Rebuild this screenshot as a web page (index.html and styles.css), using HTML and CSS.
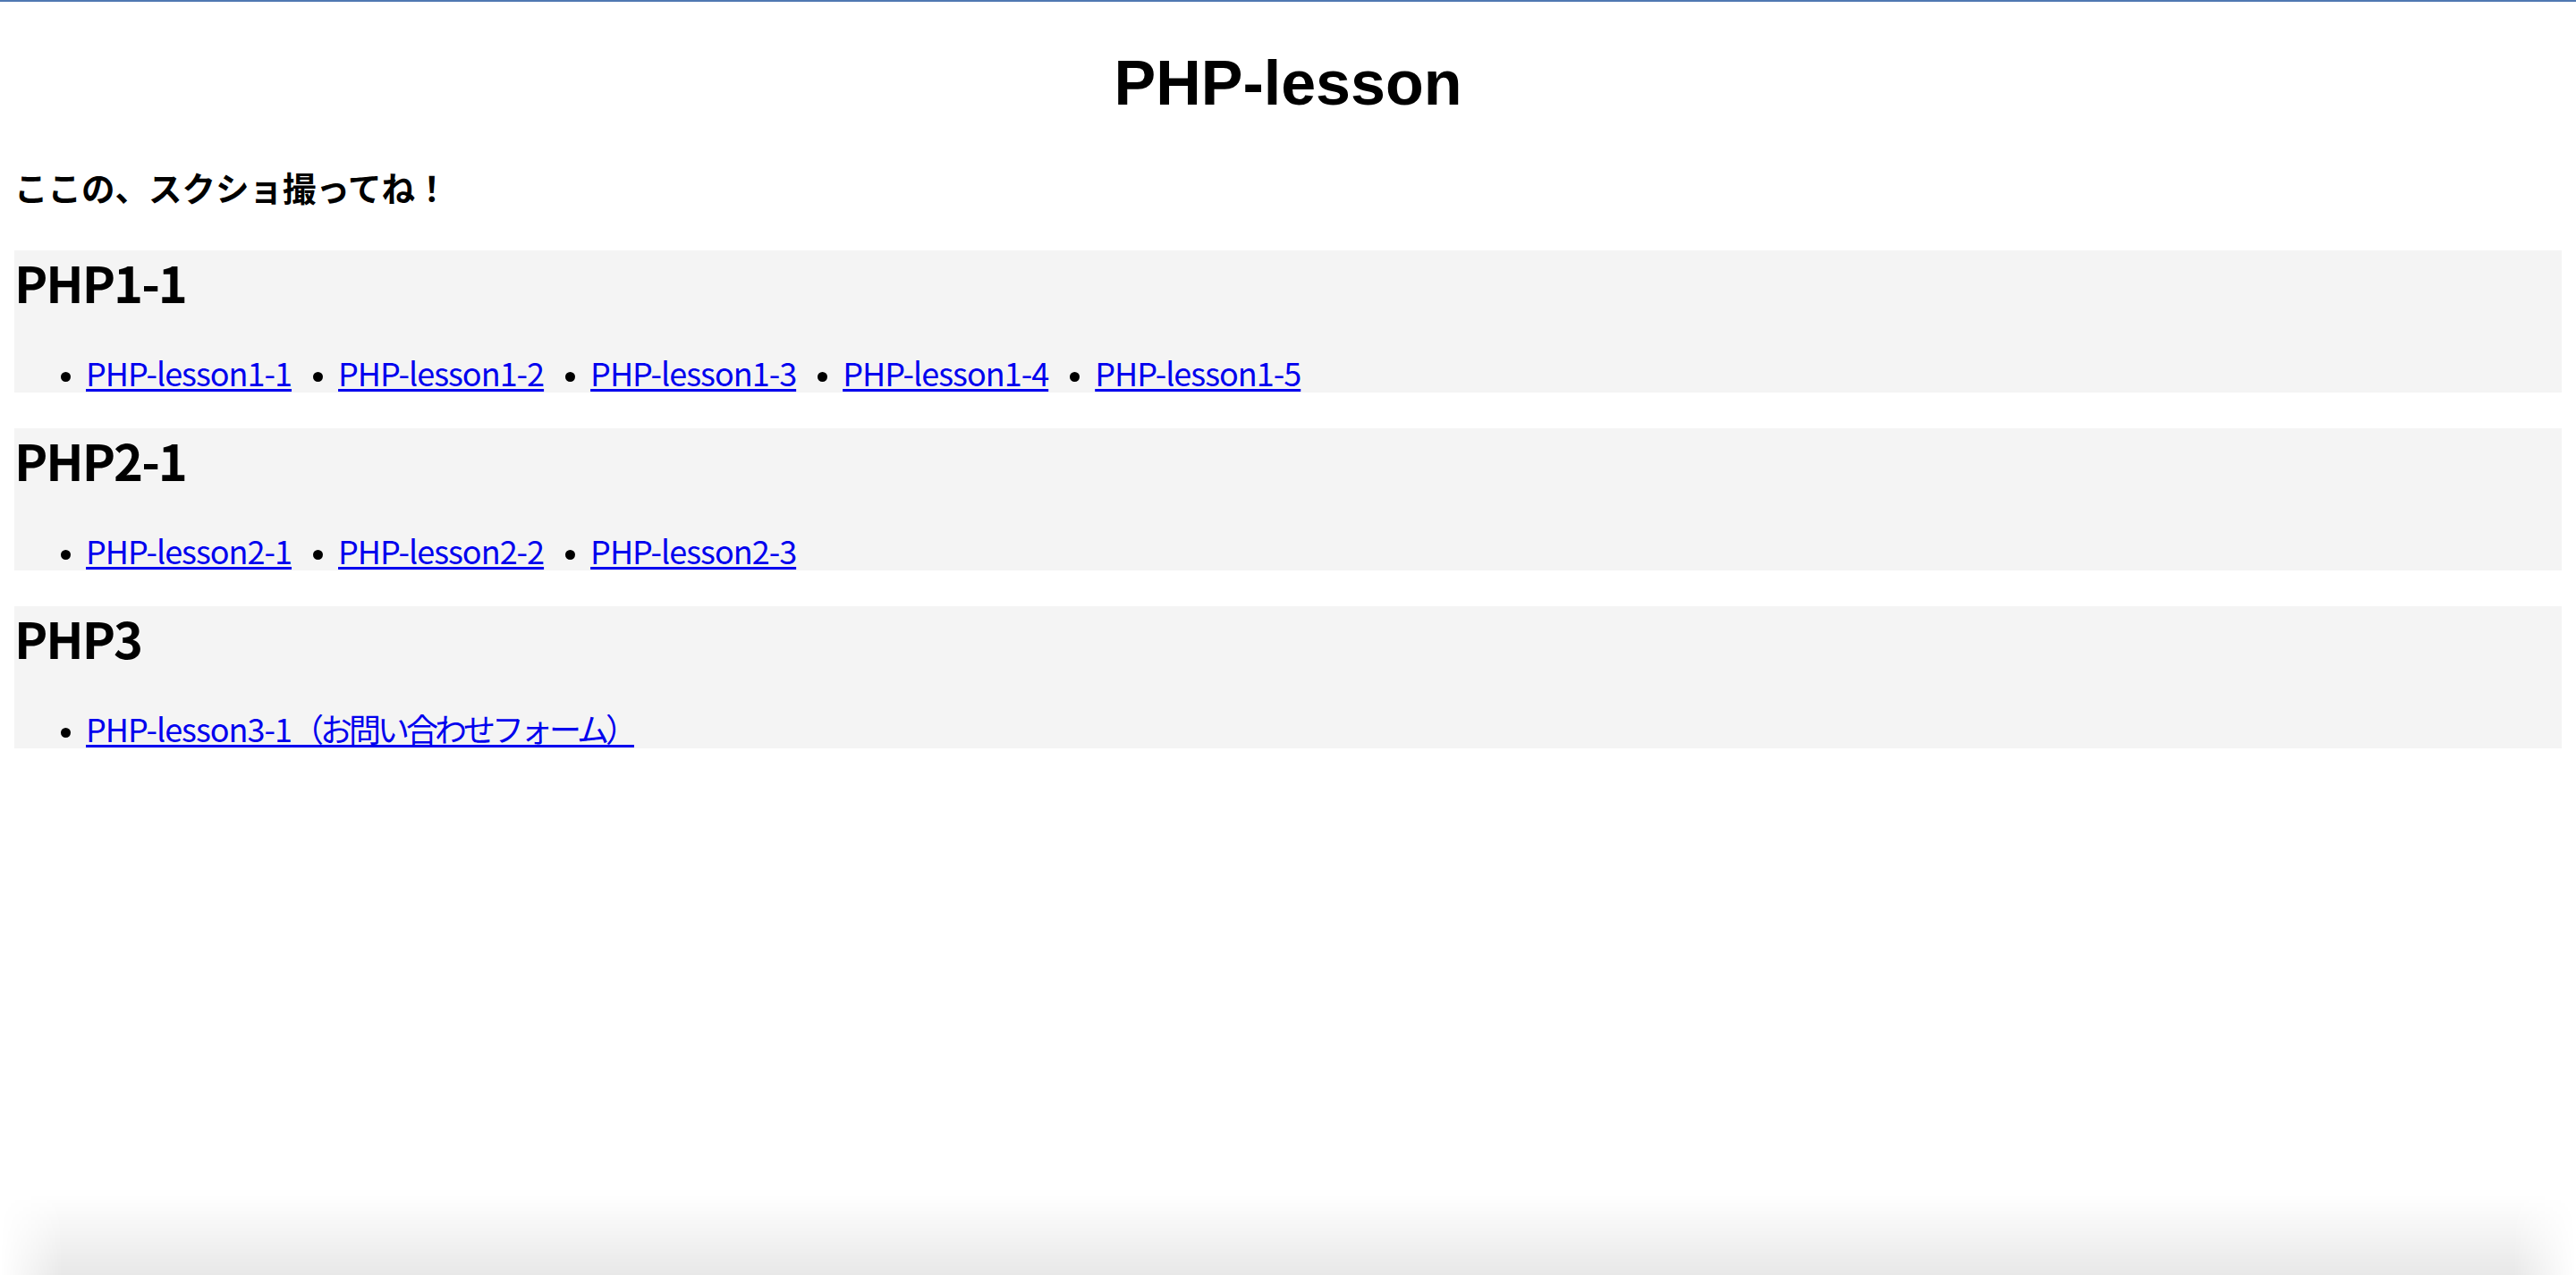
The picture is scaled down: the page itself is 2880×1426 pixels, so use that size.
FILE: index.html
```html
<!DOCTYPE html>
<html lang="ja">
<head>
<meta charset="utf-8">
<title>PHP-lesson</title>
<link rel="stylesheet" href="styles.css">
</head>
<body>
<div class="topline"></div>
<main class="page">
  <h1 class="title">PHP-lesson</h1>
  <p class="note">ここの、スクショ撮ってね！</p>

  <section class="lesson">
    <h2 class="lesson-title">PHP1-1</h2>
    <ul class="lesson-links">
      <li><a href="#">PHP-lesson1-1</a></li>
      <li><a href="#">PHP-lesson1-2</a></li>
      <li><a href="#">PHP-lesson1-3</a></li>
      <li><a href="#">PHP-lesson1-4</a></li>
      <li><a href="#">PHP-lesson1-5</a></li>
    </ul>
  </section>

  <section class="lesson">
    <h2 class="lesson-title">PHP2-1</h2>
    <ul class="lesson-links">
      <li><a href="#">PHP-lesson2-1</a></li>
      <li><a href="#">PHP-lesson2-2</a></li>
      <li><a href="#">PHP-lesson2-3</a></li>
    </ul>
  </section>

  <section class="lesson">
    <h2 class="lesson-title">PHP3</h2>
    <ul class="lesson-links">
      <li><a href="#">PHP-lesson3-1<span class="ja">（お問い合わせフォーム）</span></a></li>
    </ul>
  </section>
</main>
<div class="window-shade"></div>
</body>
</html>
```

FILE: styles.css
```css
html, body {
  margin: 0;
  padding: 0;
  background: #ffffff;
}

body {
  font-family: "Noto Sans CJK JP", "Noto Sans", sans-serif;
  font-size: 36px;
  color: #000000;
}

.topline {
  height: 2px;
  background: #4f78b2;
}

.page {
  padding: 0 16px;
}

.title {
  font-family: "Liberation Sans", Arial, sans-serif;
  font-size: 70px;
  line-height: 82px;
  font-weight: bold;
  text-align: center;
  margin: 50px 0 0;
}

.note {
  font-size: 37.5px;
  line-height: 46px;
  font-weight: bold;
  margin: 52px 0 0;
}

.lesson {
  background: #f4f4f4;
  margin-top: 48px;
}

.lesson + .lesson {
  margin-top: 40px;
}

.lesson-title {
  font-size: 56px;
  line-height: 70px;
  font-weight: bold;
  letter-spacing: -2px;
  margin: 0;
}

.lesson-links {
  display: flex;
  gap: 52px;
  list-style: disc outside;
  margin: 43px 0 0;
  padding: 0 0 0 80px;
  font-size: 36px;
  line-height: 46px;
}

.lesson-links li {
  display: list-item;
}

.lesson-links li::marker {
  font-size: 28px;
}

.lesson-links a {
  color: #0000ee;
  text-decoration: underline;
  text-decoration-thickness: 3px;
  text-underline-offset: 3px;
  letter-spacing: -1px;
}

.lesson-links .ja {
  letter-spacing: -4px;
}

.window-shade {
  position: fixed;
  left: 0;
  right: 0;
  bottom: 0;
  height: 90px;
  pointer-events: none;
  background: linear-gradient(to bottom, rgba(0, 0, 0, 0), rgba(0, 0, 0, 0.09));
  -webkit-mask-image: linear-gradient(to right, transparent 0, #000 70px, #000 calc(100% - 70px), transparent 100%);
  mask-image: linear-gradient(to right, transparent 0, #000 70px, #000 calc(100% - 70px), transparent 100%);
}
```
